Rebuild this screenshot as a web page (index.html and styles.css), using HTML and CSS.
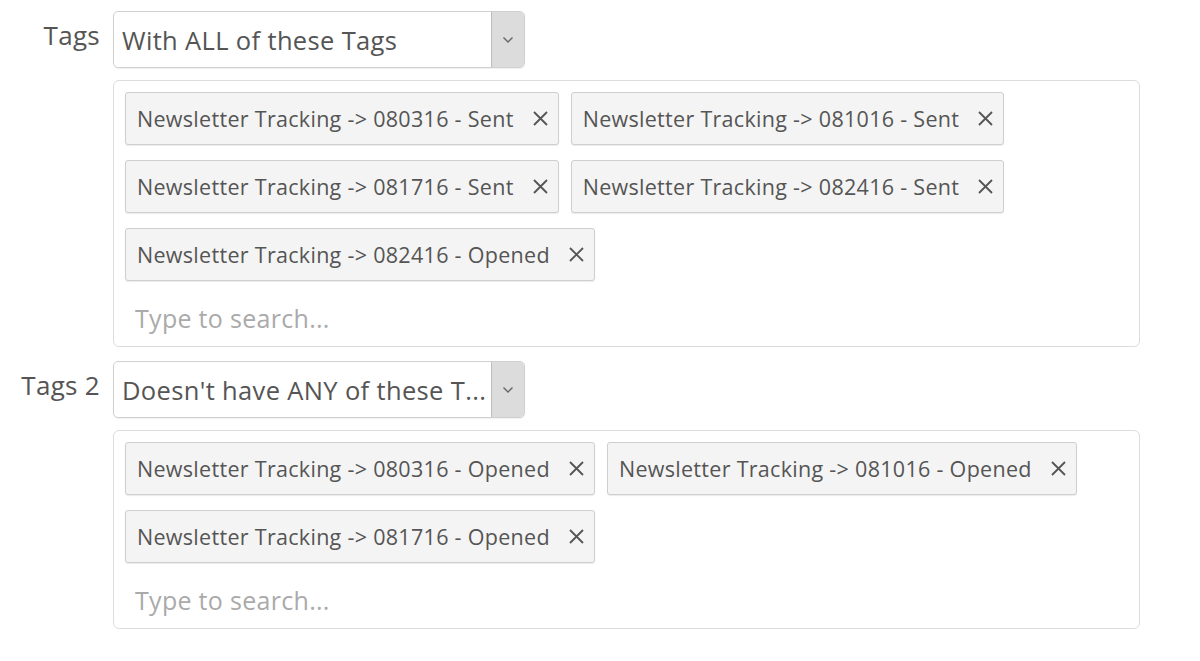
FILE: index.html
```html
<!DOCTYPE html>
<html>
<head>
<meta charset="utf-8">
<link rel="stylesheet" href="styles.css">
</head>
<body>
<div class="form">
  <div class="field">
    <label class="label">Tags</label>
    <div class="control">
      <div class="select">
        <span class="select-text">With ALL of these Tags</span>
        <span class="select-btn"><svg width="12" height="8" viewBox="0 0 12 8"><path d="M1.5 1.5 L6 6 L10.5 1.5" fill="none" stroke="#666" stroke-width="1.4"/></svg></span>
      </div>
      <div class="tagbox">
        <div class="tags">
          <span class="tag"><span class="tag-text">Newsletter Tracking -&gt; 080316 - Sent</span><svg class="x" width="15" height="15" viewBox="0 0 15 15"><path d="M1 1 L14 14 M14 1 L1 14"/></svg></span>
          <span class="tag"><span class="tag-text">Newsletter Tracking -&gt; 081016 - Sent</span><svg class="x" width="15" height="15" viewBox="0 0 15 15"><path d="M1 1 L14 14 M14 1 L1 14"/></svg></span>
          <span class="tag"><span class="tag-text">Newsletter Tracking -&gt; 081716 - Sent</span><svg class="x" width="15" height="15" viewBox="0 0 15 15"><path d="M1 1 L14 14 M14 1 L1 14"/></svg></span>
          <span class="tag"><span class="tag-text">Newsletter Tracking -&gt; 082416 - Sent</span><svg class="x" width="15" height="15" viewBox="0 0 15 15"><path d="M1 1 L14 14 M14 1 L1 14"/></svg></span>
          <span class="tag"><span class="tag-text">Newsletter Tracking -&gt; 082416 - Opened</span><svg class="x" width="15" height="15" viewBox="0 0 15 15"><path d="M1 1 L14 14 M14 1 L1 14"/></svg></span>
        </div>
        <div class="search">Type to search...</div>
      </div>
    </div>
  </div>
  <div class="field field2">
    <label class="label">Tags 2</label>
    <div class="control">
      <div class="select">
        <span class="select-text">Doesn't have ANY of these T...</span>
        <span class="select-btn"><svg width="12" height="8" viewBox="0 0 12 8"><path d="M1.5 1.5 L6 6 L10.5 1.5" fill="none" stroke="#666" stroke-width="1.4"/></svg></span>
      </div>
      <div class="tagbox">
        <div class="tags">
          <span class="tag"><span class="tag-text">Newsletter Tracking -&gt; 080316 - Opened</span><svg class="x" width="15" height="15" viewBox="0 0 15 15"><path d="M1 1 L14 14 M14 1 L1 14"/></svg></span>
          <span class="tag"><span class="tag-text">Newsletter Tracking -&gt; 081016 - Opened</span><svg class="x" width="15" height="15" viewBox="0 0 15 15"><path d="M1 1 L14 14 M14 1 L1 14"/></svg></span>
          <span class="tag"><span class="tag-text">Newsletter Tracking -&gt; 081716 - Opened</span><svg class="x" width="15" height="15" viewBox="0 0 15 15"><path d="M1 1 L14 14 M14 1 L1 14"/></svg></span>
        </div>
        <div class="search">Type to search...</div>
      </div>
    </div>
  </div>
</div>
</body>
</html>
```
FILE: styles.css
```css
html, body {
  margin: 0;
  padding: 0;
  background: #fff;
}
body {
  font-family: "Open Sans", "Lato", sans-serif;
  color: #555;
}
.form {
  padding-top: 11px;
  width: 1140px;
}
.field {
  display: grid;
  grid-template-columns: 100px 1fr;
  column-gap: 13px;
}
.field2 {
  margin-top: 14px;
}
.label {
  text-align: right;
  font-size: 26px;
  letter-spacing: 0.3px;
  color: #555;
  line-height: 30px;
  padding-top: 9px;
  white-space: nowrap;
}
.control {
  display: flex;
  flex-direction: column;
  gap: 12px;
}
.select {
  width: 410px;
  height: 55px;
  border: 1px solid #d0d0d0;
  border-radius: 5px;
  display: flex;
  align-items: stretch;
  overflow: hidden;
  box-shadow: 0 1px 1px rgba(0,0,0,0.06);
}
.select-text {
  flex: 1;
  display: flex;
  align-items: center;
  padding-left: 8px;
  font-size: 25.5px;
  letter-spacing: 0.35px;
  color: #555;
  white-space: nowrap;
  overflow: hidden;
}
.select-btn {
  width: 32px;
  background: #dcdcdc;
  border-left: 1px solid #bdbdbd;
  display: flex;
  align-items: center;
  justify-content: center;
}
.tagbox {
  border: 1px solid #dcdcdc;
  border-radius: 6px;
  padding: 11px 11px 8px 11px;
}
.tags {
  display: flex;
  flex-wrap: wrap;
  gap: 15px 12px;
}
.tag {
  display: inline-flex;
  align-items: center;
  height: 51px;
  padding: 0 10px 0 11px;
  border: 1px solid #cfcfcf;
  border-radius: 3px;
  background: #f4f4f4;
  box-shadow: 0 1px 1px rgba(0,0,0,0.08);
  font-size: 21.5px;
  letter-spacing: 0.3px;
  color: #555;
  white-space: nowrap;
}
.x {
  margin-left: 19px;
  fill: none;
  stroke: #555;
  stroke-width: 1.8;
}
.search {
  height: 40px;
  margin-top: 17px;
  display: flex;
  align-items: center;
  padding-left: 10px;
  font-size: 25px;
  letter-spacing: 0.3px;
  color: #aaa;
}
```
